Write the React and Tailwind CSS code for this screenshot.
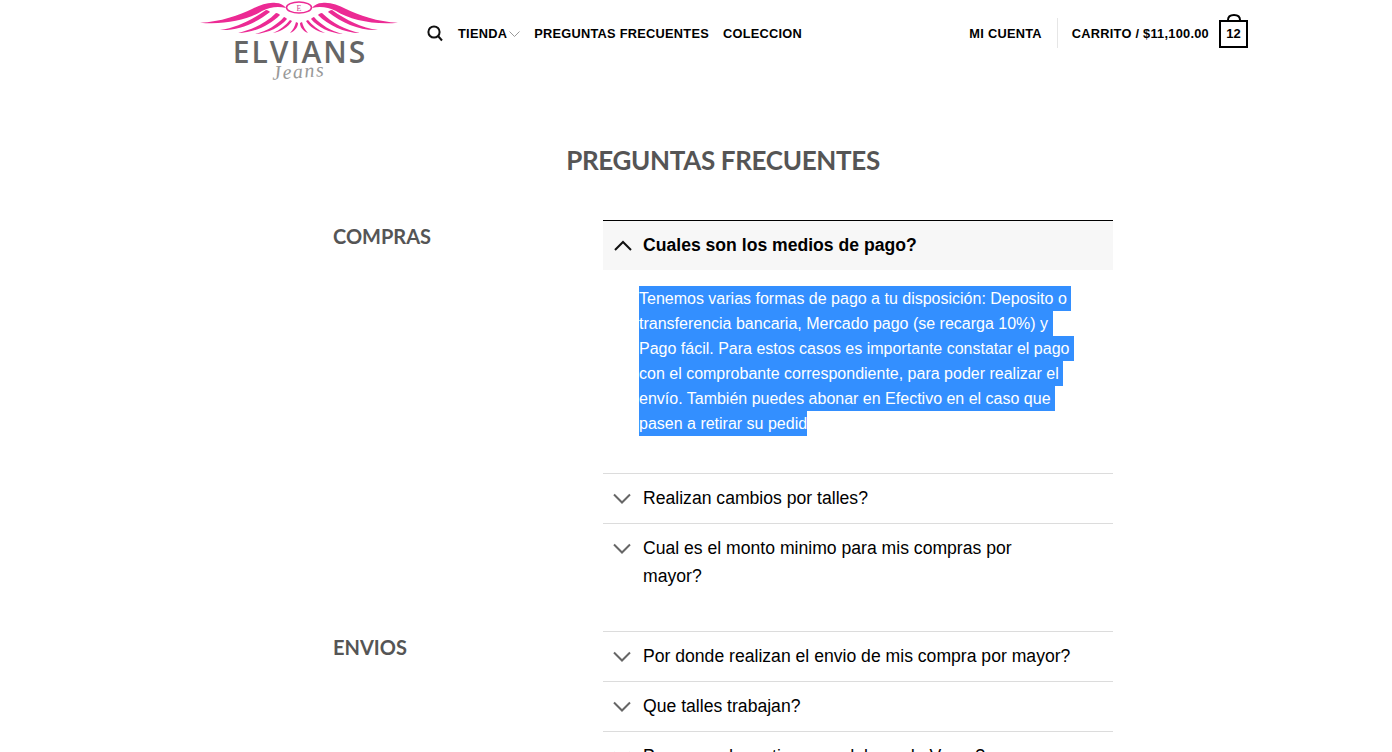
import React from "react";

const feathers = [
  "M0 22.7 C20 22 40 15 52 9 C60 5 68 2 76 3 C80 3 84 5 86 8 C78 6 70 7 62 11 C48 20 24 25 0 22.7 Z",
  "M20 30 C36 28 52 20 66 10 C68 10 69 11 70 12 C56 23 38 31 20 30 Z",
  "M38 33 C52 30 66 23 76 13 C78 13 79 14 80 15 C70 25 54 33 38 33 Z",
  "M55 34 C67 31 77 25 84 17 C85 17 86 18 87 19 C80 27 69 33 55 34 Z",
  "M73 33 C80 30 86 25 90 20 L92 21 C88 27 82 31 73 33 Z",
  "M90 33 C93 30 95 26 96 22 L98 23 C98 27 95 31 90 33 Z",
];

function Logo() {
  return (
    <div className="w-[198px] h-[80px] flex flex-col items-center">
      <svg width="198" height="36" viewBox="0 0 198 36" className="shrink-0">
        <g fill="#ec2a94">
          {feathers.map((d) => (
            <path key={d} d={d} />
          ))}
          <g transform="translate(198 0) scale(-1 1)">
            {feathers.map((d) => (
              <path key={d} d={d} />
            ))}
          </g>
        </g>
        <ellipse cx="99" cy="7.5" rx="12.5" ry="5.5" fill="#fff" stroke="#ec2a94" strokeWidth="1.6" />
        <text x="99" y="10.5" textAnchor="middle" fontSize="8" fontFamily="Liberation Serif, serif" fill="#d0408f">E</text>
      </svg>
      <div className="mt-[5px] ml-[2px] h-[22px] text-[30px] leading-[22px] tracking-[2px] text-[#666] font-['Open_Sans',sans-serif] font-semibold whitespace-nowrap">
        ELVIANS
      </div>
      <div className="-mt-[1px] text-[20px] leading-[18px] tracking-[1.5px] italic text-[#999] font-['Liberation_Serif',serif] -rotate-[4deg]">
        Jeans
      </div>
    </div>
  );
}

function Chevron({ up }) {
  return (
    <svg width="19" height="11" viewBox="0 0 19 11" fill="none" className="shrink-0 mt-[9px]">
      <path
        d={up ? "M1 10 L9 2 L17 10" : "M1 1.5 L9 9.5 L17 1.5"}
        stroke={up ? "#111" : "#666"}
        strokeWidth="2"
      />
    </svg>
  );
}

function Row({ text }) {
  return (
    <div className="border-t border-[#dcdcdc] flex gap-[11px] pl-[10px] pr-[40px] pt-[10px] pb-[11px]">
      <Chevron />
      <span className="text-[17.6px] leading-[28px] text-black">{text}</span>
    </div>
  );
}

const lines = [
  "Tenemos varias formas de pago a tu disposición: Deposito o",
  "transferencia bancaria, Mercado pago (se recarga 10%) y",
  "Pago fácil. Para estos casos es importante constatar el pago",
  "con el comprobante correspondiente, para poder realizar el",
  "envío. También puedes abonar en Efectivo en el caso que",
];

function NavLink({ children, className = "" }) {
  return (
    <span className={`mt-[2px] text-[12.8px] leading-[24px] font-bold tracking-[0.256px] text-black whitespace-nowrap ${className}`}>
      {children}
    </span>
  );
}

export default function App() {
  return (
    <div className="h-[752px] w-full overflow-hidden bg-white font-['Liberation_Sans',Arial,sans-serif]">
      <header className="h-[66px] flex pl-[200px] pr-[144px]">
        <Logo />
        <nav className="flex items-center h-[66px] ml-[29px] grow">
          <svg width="16" height="17" viewBox="0 0 16 17" fill="none" stroke="#111" strokeWidth="2" className="mr-[15px]">
            <circle cx="7" cy="7" r="5.6" />
            <path d="M11 11 L15 15.5" />
          </svg>
          <NavLink>TIENDA</NavLink>
          <svg width="11" height="6" viewBox="0 0 11 6" fill="none" stroke="#999" strokeWidth="1" className="ml-[2px] mt-[2px] mr-[14px]">
            <path d="M0.5 0.5 L5.5 5.5 L10.5 0.5" />
          </svg>
          <NavLink>PREGUNTAS FRECUENTES</NavLink>
          <NavLink className="ml-[14px]">COLECCION</NavLink>
          <NavLink className="ml-auto">MI CUENTA</NavLink>
          <div className="w-px h-[30px] bg-[#e6e6e6] ml-[15px] mr-[14px]" />
          <NavLink>CARRITO / $11,100.00</NavLink>
          <div className="relative ml-[10px] mt-[2px] w-[29px] h-[28px] border-2 border-black flex items-center justify-center text-[13px] font-bold text-black">
            12
            <svg width="16" height="8" viewBox="0 0 16 8" fill="none" stroke="#000" strokeWidth="2" className="absolute left-[4.5px] -top-[8px]">
              <path d="M2 8 V6 C2 2.5 4.5 1 8 1 C11.5 1 14 2.5 14 6 V8" />
            </svg>
          </div>
        </nav>
      </header>

      <main className="pl-[333px]">
        <h1 className="mt-[78px] w-[780px] text-center text-[26px] leading-[32px] font-bold text-[#555] font-['Lato',sans-serif] tracking-[-0.33px]">
          PREGUNTAS FRECUENTES
        </h1>

        <section className="flex mt-[44px]">
          <h2 className="w-[270px] pt-[2px] text-[20px] leading-[28px] font-bold text-[#555] font-['Lato',sans-serif]">COMPRAS</h2>
          <div className="w-[510px]">
            <div className="border-t border-black bg-[#f7f7f7] flex gap-[10px] pl-[11px] pr-[40px] pt-[10px] pb-[11px]">
              <Chevron up />
              <span className="text-[17.6px] leading-[28px] font-bold text-black">Cuales son los medios de pago?</span>
            </div>
            <div className="pl-[36px] pt-[16px] pb-[37px] flex flex-col items-start">
              {lines.map((l) => (
                <span key={l} className="bg-[#338fff] text-white text-[16px] leading-[25px] pr-[4.45px] whitespace-nowrap">{l}</span>
              ))}
              <span className="bg-[#338fff] text-white text-[16px] leading-[25px] whitespace-nowrap">pasen a retirar su pedid</span>
            </div>
            <Row text="Realizan cambios por talles?" />
            <Row text="Cual es el monto minimo para mis compras por mayor?" />
          </div>
        </section>

        <section className="flex mt-[30px]">
          <h2 className="w-[270px] pt-[2px] text-[20px] leading-[28px] font-bold text-[#555] font-['Lato',sans-serif]">ENVIOS</h2>
          <div className="w-[510px]">
            <Row text="Por donde realizan el envio de mis compra por mayor?" />
            <Row text="Que talles trabajan?" />
            <Row text="Para mas de un tipo o modelos y de Varon?" />
          </div>
        </section>
      </main>
    </div>
  );
}
